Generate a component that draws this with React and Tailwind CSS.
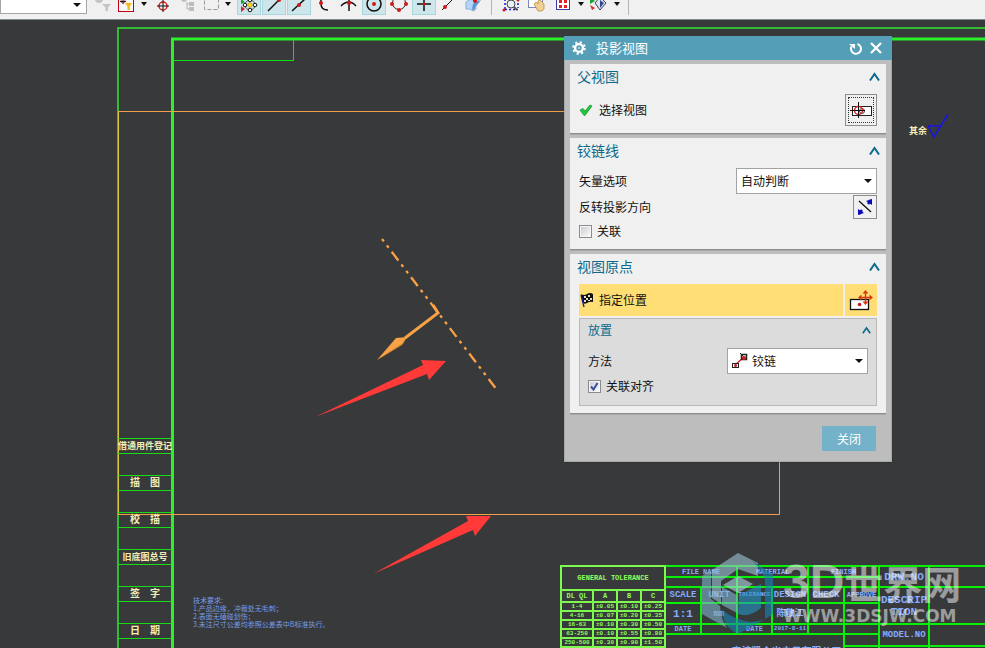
import { useState } from 'react';

// ── Iconos de la barra superior (24x24, la parte alta queda recortada) ──
const Dot = ({ x, y, r = 2 }) => <circle cx={x} cy={y} r={r} fill="#d01818" />;

const Icon = ({ children }) => (
  <svg width="24" height="24" viewBox="0 0 24 24" fill="none" className="block shrink-0">
    {children}
  </svg>
);

const ToolButton = ({ label, active, children }) => (
  <button
    type="button"
    aria-label={label}
    className={`h-6 w-6 shrink-0 border ${active ? 'border-[#a9d5df] bg-[#cde6eb]' : 'border-transparent'}`}
  >
    <span className="-m-px block">{children}</span>
  </button>
);

const MenuCaret = ({ label }) => (
  <button type="button" aria-label={label} className="flex h-6 w-2.5 shrink-0 items-center justify-center pt-0.5">
    <svg width="6" height="4" viewBox="0 0 6 4"><path d="M0 0H6L3 4Z" fill="#111" /></svg>
  </button>
);

const Separator = () => <span className="h-6 w-px shrink-0 bg-[#b5b5b5]" />;

const Toolbar = () => (
  <header className="flex h-5 shrink-0 items-end overflow-hidden border-b border-[#7f8a8c] bg-[#f0f0f0] pb-1">
    <label className="relative mb-px block h-6 w-[87px] shrink-0">
      <select aria-label="过滤器" className="h-6 w-full appearance-none border border-[#a5a5a5] bg-white">
        <option value=""></option>
      </select>
      <svg width="8" height="4" viewBox="0 0 8 4" className="pointer-events-none absolute right-1.5 bottom-[7px]">
        <path d="M0 0H8L4 4Z" fill="#111" />
      </svg>
    </label>

    <div className="ml-1 flex items-end">
      <ToolButton label="重置过滤器">
        <Icon>
          <circle cx="8" cy="8" r="4" fill="#c4c4c4" />
          <path d="M11 13H20L17 16.500V20H14.500V16.500Z" fill="#c4c4c4" />
        </Icon>
      </ToolButton>
      <ToolButton label="过滤">
        <Icon>
          <rect x="3.500" y="1.500" width="15" height="19" stroke="#c00010" fill="#f7f7f7" />
          <circle cx="8" cy="10" r="2" stroke="#e02020" strokeWidth=".8" />
          <path d="M8 7V13M5 10.500H11" stroke="#222" />
          <path d="M10 12H17L14.800 15.500V19H12.500V15.500Z" fill="#f5b81c" />
        </Icon>
      </ToolButton>
      <MenuCaret label="过滤菜单" />
      <span className="w-0.5" />
      <ToolButton label="光标">
        <Icon>
          <path d="M5 8H9" stroke="#1a1a70" strokeWidth="2" />
          <circle cx="12" cy="15" r="4" stroke="#e02020" strokeWidth="1.500" />
          <path d="M12 9V21M6 15H18" stroke="#111" />
        </Icon>
      </ToolButton>
      <ToolButton label="装配">
        <Icon>
          <circle cx="9" cy="8" r="3" fill="#c0c0c0" />
          <path d="M12 11V18H16M12 13H16" stroke="#b5b5b5" />
          <rect x="14" y="11" width="5" height="4" fill="#bdbdbd" />
          <rect x="14" y="16" width="5" height="4" fill="#bdbdbd" />
        </Icon>
      </ToolButton>
      <ToolButton label="矩形选择">
        <Icon>
          <rect x="5.500" y="3.500" width="14" height="15" stroke="#999" strokeDasharray="4 2" />
        </Icon>
      </ToolButton>
      <MenuCaret label="选择菜单" />
    </div>

    <div className="ml-1 flex items-end gap-px">
      <ToolButton label="捕捉" active>
        <Icon>
          <path d="M4 8L8 11L4 13Z" fill="#19a52c" />
          <path d="M4 15L8 18L4 21Z" fill="#d22" />
          <circle cx="13" cy="14" r="5" stroke="#555" />
          <circle cx="13" cy="14" r="2.200" fill="#ffd91c" stroke="#b58a10" strokeWidth=".6" />
          <circle cx="13" cy="9" r="1.800" fill="#fff" stroke="#111" />
          <circle cx="13" cy="19" r="1.800" fill="#fff" stroke="#111" />
          <circle cx="8" cy="14" r="1.800" fill="#fff" stroke="#111" />
          <circle cx="18" cy="14" r="1.800" fill="#fff" stroke="#111" />
        </Icon>
      </ToolButton>
      <ToolButton label="端点" active>
        <Icon><path d="M6 20L17 9" stroke="#111" strokeWidth="1.500" /><Dot x={17} y={9} /></Icon>
      </ToolButton>
      <ToolButton label="中点" active>
        <Icon><path d="M5 20L18 8" stroke="#111" strokeWidth="1.500" /><Dot x={12} y={14} /></Icon>
      </ToolButton>
      <ToolButton label="控制点">
        <Icon>
          <path d="M9 4V13Q9 19 16 19" stroke="#111" strokeWidth="1.500" /><Dot x={9} y={12} />
        </Icon>
      </ToolButton>
      <ToolButton label="交点">
        <Icon>
          <path d="M4 15Q12 7 19 15M12 6V20" stroke="#111" strokeWidth="1.500" /><Dot x={12} y={12} />
        </Icon>
      </ToolButton>
      <ToolButton label="圆心" active>
        <Icon><circle cx="12" cy="13" r="7" stroke="#111" strokeWidth="1.500" /><Dot x={12} y={13} /></Icon>
      </ToolButton>
      <ToolButton label="象限点">
        <Icon>
          <circle cx="12" cy="12" r="6.500" stroke="#222" />
          <Dot x={5} y={13} /><Dot x={19} y={13} /><Dot x={12} y={19} />
        </Icon>
      </ToolButton>
      <ToolButton label="现有点" active>
        <Icon><path d="M12 6V20M5 13H19" stroke="#111" strokeWidth="1.500" /><Dot x={12} y={13} r={1.5} /></Icon>
      </ToolButton>
      <ToolButton label="曲线上的点">
        <Icon><path d="M5 19L17 7" stroke="#111" /><Dot x={8} y={16} /></Icon>
      </ToolButton>
      <ToolButton label="面上的点">
        <Icon>
          <path d="M4 11Q8 7 12 9L17 8L14 13V18L11 20Q8 17 4 18Z" fill="#b5d5fa" stroke="#8aaedb" />
          <path d="M11 13Q14 10 19 9L16 13Q13 15 12 20L10 18Z" fill="#5f93d4" />
          <Dot x={13} y={10} />
        </Icon>
      </ToolButton>
    </div>

    <div className="ml-[5px] flex items-end gap-px">
      <Separator />
      <div className="ml-1.5 flex items-end gap-0.5">
        <ToolButton label="缩放窗口">
          <Icon>
            <path d="M6 18V4M19 4V17M6 18.500H19" stroke="#1818d8" strokeWidth="1.500" strokeDasharray="2 2" />
            <circle cx="12" cy="13" r="4" fill="#e7f1f5" stroke="#444" />
            <path d="M15 16L18 19" stroke="#555" strokeWidth="2" />
            <Dot x={5} y={19} r={1.500} /><Dot x={19} y={9} r={1.500} />
          </Icon>
        </ToolButton>
        <ToolButton label="平移">
          <Icon>
            <rect x="3.500" y="4.500" width="14" height="12" fill="#fff" stroke="#7b86bd" />
            <path d="M9 13L11 11L13 13V10L15 9L17 11L19 13V18L17 20H13Z" fill="#f2cf93" stroke="#bd8b42" strokeWidth=".8" />
          </Icon>
        </ToolButton>
        <ToolButton label="视图布局">
          <Icon>
            <rect x="5.500" y="4.500" width="13" height="14" fill="#fff" stroke="#3b3baa" />
            <path d="M8 9H11V12H8ZM13 9H16V12H13ZM8 14H11V17H8ZM13 14H16V17H13Z" fill="#e62020" />
          </Icon>
        </ToolButton>
      </div>
      <MenuCaret label="布局菜单" />
      <ToolButton label="渲染样式">
        <Icon>
          <path d="M3 6L8 10L3 13Z" fill="#18a52b" />
          <path d="M3 14L8 17L5 19Z" fill="#d22" />
          <path d="M8 12L13 6L19 12L13 19Z" fill="#dde4f5" stroke="#39415f" />
          <path d="M13 9L17 12L13 17Z" fill="#39478d" />
        </Icon>
      </ToolButton>
      <MenuCaret label="渲染菜单" />
      <span className="w-1" />
      <Separator />
    </div>
  </header>
);

// ── Geometría del plano ──────────────────────────────────
const Geometry = () => (
  <svg className="absolute inset-0 h-full w-full" fill="none">
    <g transform="translate(0 -20)">
      <path d="M118 900V28H4000" stroke="#33bb33" strokeWidth="2" />
      <path d="M172.500 900V39H4000" stroke="#2bf02b" strokeWidth="3" />
      <path d="M173 60.500H293.500V40" stroke="#10e010" />
      <path d="M118.500 514V111.500" stroke="#d8c83c" />
      <path d="M118 111.500H779.500V514.500H118" stroke="#f0a04b" />

      <path d="M382 239L497 390" stroke="#f8a145" strokeWidth="2.300" strokeDasharray="3 5 3 5 11 5" />
      <path d="M433 305L438 313L405 338" stroke="#f8a145" strokeWidth="3" />
      <path d="M377 360L396 338L407 337L402 345Z" fill="#f8a145" />
      <path d="M377 360L405 342L402 345Z" fill="#a96c2c" />

      <path d="M315 417L423 365L421 360L446 361L429 380L427 374Z" fill="#ff3a38" />
      <path d="M373 574L468 521L466 516L491 516L475 536L473 530Z" fill="#ff3a38" />

      <path d="M928 126H941M928 126L934 137L948 114" stroke="#1414f0" strokeWidth="1.500" />
    </g>
  </svg>
);

const SIDE_LABELS = ['借通用件登记', '描图', '校描', '旧底图总号', '签字', '日期'];

const SideStrip = () => (
  <div className="absolute top-[418px] left-[118px] w-[54px] font-['Liberation_Serif','Noto_Sans_CJK_SC',serif] font-bold text-[#f3edb5]">
    {SIDE_LABELS.map(text => (
      <div key={text} className="flex h-[37px] flex-col">
        <div
          className={`flex h-4 items-center justify-center border-y border-[#18dc18] whitespace-nowrap ${
            text.length > 2 ? 'text-[9px] leading-3' : 'gap-2.5 text-[10px] leading-3'
          }`}
        >
          {text.length > 2 ? text : [...text].map(c => <span key={c}>{c}</span>)}
        </div>
      </div>
    ))}
  </div>
);

const TOLERANCES = [
  ['1-4', '±0.05', '±0.10', '±0.25'],
  ['4-16', '±0.07', '±0.20', '±0.35'],
  ['16-63', '±0.10', '±0.30', '±0.50'],
  ['63-250', '±0.10', '±0.55', '±0.80'],
  ['250-500', '±0.30', '±0.90', '±1.50'],
];

const ToleranceTable = () => (
  <table className="absolute top-[545px] left-[560px] w-[106px] table-fixed border-collapse border-2 border-[#7dfa4d] text-center font-['Liberation_Mono',monospace] font-bold text-[#8dff5c]">
    <colgroup>
      <col className="w-8" />
      <col />
      <col />
      <col />
    </colgroup>
    <thead>
      <tr className="h-6 text-[7px] leading-[8px]">
        <th colSpan={4}>GENERAL TOLERANCE</th>
      </tr>
      <tr className="h-3 border border-[#7dfa4d] text-[7px] leading-[8px]">
        <th className="border-2 border-[#7dfa4d] whitespace-nowrap">DL QL</th>
        <th className="border-2 border-[#7dfa4d]">A</th>
        <th className="border-2 border-[#7dfa4d]">B</th>
        <th className="border-2 border-[#7dfa4d]">C</th>
      </tr>
    </thead>
    <tbody>
      {TOLERANCES.map(row => (
        <tr key={row[0]} className="h-[9px] text-[6px] leading-[7px]">
          {row.map((v, i) => (
            <td key={i} className="border-2 border-[#7dfa4d] p-0">{v}</td>
          ))}
        </tr>
      ))}
    </tbody>
  </table>
);

const Cell = ({ className = '', children }) => (
  <div className={`flex items-center justify-center overflow-hidden bg-[#38393b] text-center ${className}`}>{children}</div>
);

// ── Cajetín: el fondo verde hace de línea entre celdas ───
const TitleBlock = () => (
  <div className="absolute top-[545px] right-0 left-[664px] grid grid-cols-[34px_34px_33px_34px_34px_33px_48px_1fr] grid-rows-[9px_8px_14px_19px_8px_10px_12px] gap-0.5 bg-[#08f008] pt-0.5 pl-0.5 font-['Liberation_Mono','Noto_Sans_CJK_SC',monospace] text-[7px] leading-[8px] font-bold text-[#86acff]">
    <Cell className="col-span-2">FILE NAME</Cell>
    <Cell className="col-span-2">MATERIAL</Cell>
    <Cell className="col-span-2">FINISH</Cell>
    <Cell className="row-span-2 text-[11px] leading-3">DRW.NO</Cell>
    <Cell className="row-span-2" />
    <Cell className="col-span-2" />
    <Cell className="col-span-2" />
    <Cell className="col-span-2" />

    <Cell className="text-[9px]">SCALE</Cell>
    <Cell className="text-[9px]">UNIT</Cell>
    <Cell className="text-[6px]">TOLERANCE</Cell>
    <Cell className="text-[9px]">DESIGN</Cell>
    <Cell className="text-[9px]">CHECK</Cell>
    <Cell>APPROVE</Cell>
    <Cell className="row-span-2 text-[11px] leading-3">DESCRIP<br />TION</Cell>
    <Cell className="row-span-2" />

    <Cell className="text-[11px]">1:1</Cell>
    <Cell className="text-[9px]">mm</Cell>
    <Cell />
    <Cell className="text-[9px]">陈敬江</Cell>
    <Cell />
    <Cell />

    <Cell>DATE</Cell>
    <Cell />
    <Cell>DATE</Cell>
    <Cell className="text-[6px]">2017-8-11</Cell>
    <Cell />
    <Cell />
    <Cell className="row-span-2 text-[9px]">MODEL.NO</Cell>
    <Cell className="row-span-2" />

    <Cell className="col-span-5 row-span-2 pt-3 pl-16 text-[10px] whitespace-nowrap">宁波凯众出电子有限公司</Cell>
    <Cell />
    <Cell />
    <Cell />
    <Cell />
  </div>
);

const Watermark = () => (
  <div className="pointer-events-none absolute top-[532px] left-[701px] flex items-start gap-2.5">
    <svg width="72" height="84" viewBox="0 0 72 84" className="shrink-0 opacity-60">
      <path d="M11 18L37 1L57 11V24L37 17L20 29V52L11 46Z" fill="#9cc4d4" />
      <path d="M1 24L10 18V47L19 54Q20 68 26 76L1 62Z" fill="#7fb3cb" />
      <path d="M51 9L72 22V62L64 67V27Q60 16 51 9Z" fill="#1687b8" />
      <path d="M21 58Q34 68 50 70Q60 70 71 63L37 82Q22 75 21 58Z" fill="#1687b8" />
      <path d="M22 33L37 24L52 32L37 41Z" fill="#b1d6e3" />
      <path d="M21 35L36 43V61L21 53Z" fill="#7fb6cf" />
      <path d="M38 43L60 32V56Q48 66 37 62Z" fill="#2396c6" />
    </svg>
    <div className="flex flex-col font-bold whitespace-nowrap text-white/50">
      <div className="flex items-center pt-1.5">
        <span className="font-['Liberation_Sans',sans-serif] text-[48px] leading-[48px]">3D</span>
        <span className="font-['Noto_Sans_CJK_SC',sans-serif] text-[39px] leading-[48px]">世界网</span>
      </div>
      <span className="font-['DejaVu_Sans',sans-serif] text-[17px] leading-5">WWW.3DSJW.COM</span>
    </div>
  </div>
);

// ── Cuadro de diálogo ────────────────────────────────────
const Chevron = ({ small }) => (
  <svg width={small ? 9 : 11} height={small ? 8 : 9} viewBox="0 0 11 9" fill="none">
    <path d="M1 8.500L5.500 2L10 8.500" stroke="#0b6a8c" strokeWidth="2" />
  </svg>
);

const Panel = ({ title, children }) => {
  const [open, setOpen] = useState(true);
  return (
    <section className="border-b border-[#8f8f8f] bg-[#f0f0f0] shadow-[0_1px_0_#a9a9a9]">
      <button
        type="button"
        onClick={() => setOpen(!open)}
        className="flex h-[26px] w-full items-center justify-between pr-1.5 pb-0.5 pl-[7px] text-[14px] leading-5 text-[#0b6a8c]"
      >
        {title}
        <Chevron />
      </button>
      {open && <div className="px-[9px] pt-1 pb-[7px]">{children}</div>}
    </section>
  );
};

const Dropdown = ({ id, value, icon }) => (
  <div className="relative w-[141px]">
    <select
      id={id}
      className={`h-[26px] w-full appearance-none border border-[#a3a3a3] bg-white text-[12px] text-[#111] ${icon ? 'pl-6' : 'pl-1'}`}
    >
      <option>{value}</option>
    </select>
    {icon && <span className="pointer-events-none absolute top-1 left-1">{icon}</span>}
    <svg width="8" height="4" viewBox="0 0 8 4" className="pointer-events-none absolute top-[11px] right-[5px]">
      <path d="M0 0H8L4 4Z" fill="#111" />
    </svg>
  </div>
);

const Checkbox = ({ label, defaultChecked }) => (
  <label className="flex items-center gap-[5px] leading-[14px]">
    <span className="relative block size-[13px]">
      <input
        type="checkbox"
        defaultChecked={defaultChecked}
        className="peer block size-[13px] appearance-none border border-[#8b8b8b] bg-linear-to-br from-[#c5c9d0] to-white shadow-[inset_0_0_0_1px_#f5f5f5]"
      />
      <svg
        width="13"
        height="13"
        viewBox="0 0 13 13"
        fill="none"
        className="pointer-events-none absolute inset-0 hidden peer-checked:block"
      >
        <path d="M3 6.500L5.500 9.500L9.500 3" stroke="#3c4f9a" strokeWidth="2" />
      </svg>
    </span>
    {label}
  </label>
);

const HingeIcon = () => (
  <svg width="17" height="17" viewBox="0 0 17 17" fill="none">
    <path d="M4 13L13 5" stroke="#cf2020" strokeWidth="1.300" />
    <rect x="1.500" y="11.500" width="6" height="4" stroke="#222" />
    <rect x="10.500" y="2.500" width="5" height="5" stroke="#222" strokeWidth="1.500" />
    <path d="M9 1L15 7" stroke="#222" />
    <circle cx="4.500" cy="13.500" r="1.500" fill="#cf2020" />
    <circle cx="13" cy="6" r="2" fill="#cf2020" />
  </svg>
);

const ProjectedViewDialog = ({ onClose }) => (
  <div
    role="dialog"
    aria-label="投影视图"
    className="absolute top-4 left-[564px] w-[328px] border border-t-0 border-[#a5a9aa] bg-[#bdbdbd] pb-2.5 text-[12px] text-[#111] shadow-sm"
  >
    <div className="-mx-px flex h-6 items-center bg-[#549eb7] pr-2.5 pl-2 text-white">
      <svg width="14" height="14" viewBox="0 0 14 14" fill="none">
        <circle cx="7" cy="7" r="3.900" stroke="#fff" strokeWidth="2.400" />
        <circle cx="7" cy="7" r="5.800" stroke="#fff" strokeWidth="2" strokeDasharray="2.250 2.300" />
        <circle cx="7" cy="7" r="1" fill="#fff" opacity=".7" />
      </svg>
      <h2 className="ml-2.5 flex-1 text-[13px] leading-5">投影视图</h2>
      <button type="button" aria-label="重置" className="mr-2">
        <svg width="13" height="14" viewBox="0 0 13 14" fill="none">
          <path d="M8.500 3A5 5 0 1 1 2.500 5.500" stroke="#fff" strokeWidth="2" />
          <path d="M0 3H6V8Z" fill="#fff" />
        </svg>
      </button>
      <button type="button" aria-label="关闭窗口" onClick={onClose}>
        <svg width="12" height="12" viewBox="0 0 12 12"><path d="M1 1L11 11M11 1L1 11" stroke="#fff" strokeWidth="2.200" /></svg>
      </button>
    </div>

    <div className="flex flex-col gap-1 px-[5px] pt-1">
      <Panel title="父视图">
        <div className="flex items-center justify-between">
          <span className="flex items-center gap-1.5">
            <svg width="14" height="12" viewBox="0 0 14 12">
              <path d="M1 6L4 4.500L6 7L11 1L13 2L6 11.500H5Z" fill="#1fc93a" stroke="#128d26" strokeWidth=".7" />
            </svg>
            选择视图
          </span>
          <button type="button" aria-label="选择视图" className="size-8 border border-[#8d8d8d] p-0.5">
            <span className="flex size-full items-center justify-center border border-dotted border-[#333]">
              <svg width="24" height="20" viewBox="0 0 24 20" fill="none" className="shrink-0">
                <rect x="3.500" y="6.500" width="19" height="9" fill="#fff" stroke="#222" />
                <circle cx="13" cy="11" r="2.500" stroke="#444" />
                <circle cx="9.500" cy="10.500" r="4" stroke="#e02222" strokeWidth="1.500" />
                <path d="M9.500 2V18M1 10.500H16" stroke="#111" />
              </svg>
            </span>
          </button>
        </div>
      </Panel>

      <Panel title="铰链线">
        <div className="flex items-center justify-between">
          <label htmlFor="vector">矢量选项</label>
          <Dropdown id="vector" value="自动判断" />
        </div>
        <div className="mt-px flex items-center justify-between">
          <span>反转投影方向</span>
          <button type="button" aria-label="反转投影方向" className="flex size-6 items-center justify-center border border-[#8d8d8d]">
            <svg width="18" height="18" viewBox="0 0 18 18" fill="none">
              <path d="M3 3L15 14" stroke="#111" strokeWidth="1.300" />
              <path d="M3 16L6 12M12 6L15 2" stroke="#0808b8" strokeWidth="2.500" />
              <path d="M2 17V11L8 15ZM16 1V7L10 3Z" fill="#0808b8" />
            </svg>
          </button>
        </div>
        <div className="mt-[5px] mb-1">
          <Checkbox label="关联" />
        </div>
      </Panel>

      <Panel title="视图原点">
        <div className="flex h-8 gap-0.5">
          <div className="flex flex-1 items-center gap-1.5 bg-[#ffdf75] pl-px">
            <svg width="13" height="14" viewBox="0 0 13 14">
              <path d="M1 1Q4 3 7 1T13 1V9Q10 8 7 10T3 9Z" fill="#111" />
              <path d="M1 2L4 14" stroke="#1818a0" strokeWidth="1.300" />
              <path d="M4 3H6V5H4ZM8 2H10V4H8ZM6 5H8V7H6ZM10 5H12V7H10ZM4 7H6V9H4ZM8 7H10V8H8Z" fill="#e8dfbf" />
            </svg>
            指定位置
          </div>
          <button type="button" aria-label="指定位置" className="flex w-8 items-center justify-center bg-[#ffdf75]">
            <svg width="24" height="22" viewBox="0 0 24 22" fill="none">
              <rect x="1.500" y="10.500" width="18" height="10" fill="#fff" stroke="#111" strokeWidth="1.300" />
              <path d="M16.500 3V14M11 8.500H22" stroke="#d63a10" strokeWidth="1.500" />
              <path d="M16.500 1L13.500 4.500H19.500ZM16.500 16L13.500 12.500H19.500ZM9 8.500L12.500 5.500V11.500ZM24 8.500L20.500 5.500V11.500Z" fill="#d63a10" />
              <circle cx="10.500" cy="15.500" r="1.800" fill="#d01818" />
            </svg>
          </button>
        </div>

        <div className="mt-0.5 border border-[#b9b9b9] bg-[#dcdcdc] px-2 pb-3">
          <div className="flex h-[22px] items-center justify-between pr-px text-[#0b6a8c]">
            放置
            <button type="button" aria-label="折叠放置" className="-mr-1"><Chevron small /></button>
          </div>
          <div className="mt-[7px] flex items-center justify-between">
            <label htmlFor="method">方法</label>
            <Dropdown id="method" value="铰链" icon={<HingeIcon />} />
          </div>
          <div className="mt-[5px]">
            <Checkbox label="关联对齐" defaultChecked />
          </div>
        </div>
      </Panel>
    </div>

    <div className="mt-3 flex justify-end pr-[15px]">
      <button type="button" onClick={onClose} className="h-[25px] w-[54px] bg-[#73b2c9] text-white">
        关闭
      </button>
    </div>
  </div>
);

export default function App() {
  const [dialogOpen, setDialogOpen] = useState(true);

  return (
    <div className="flex h-screen w-full flex-col overflow-hidden bg-[#38393b] font-['Noto_Sans_CJK_SC',sans-serif]">
      <Toolbar />
      <main className="relative flex-1 overflow-hidden">
        <Geometry />
        <SideStrip />

        <p className="absolute top-[105px] left-[909px] text-[9px] leading-3 font-bold text-[#f3edb5]">其余</p>

        <div className="absolute top-[576px] left-[193px] text-[7px] leading-[8px] whitespace-nowrap text-[#759ce8]">
          <p>技术要求:</p>
          <p>1.产品边缘，冲裁处无毛刺；</p>
          <p>2.表面无磕碰划伤；</p>
          <p>3.未注尺寸公差均参照公差表中B标准执行。</p>
        </div>

        <TitleBlock />
        <ToleranceTable />
        <Watermark />

        {dialogOpen && <ProjectedViewDialog onClose={() => setDialogOpen(false)} />}
      </main>
    </div>
  );
}
